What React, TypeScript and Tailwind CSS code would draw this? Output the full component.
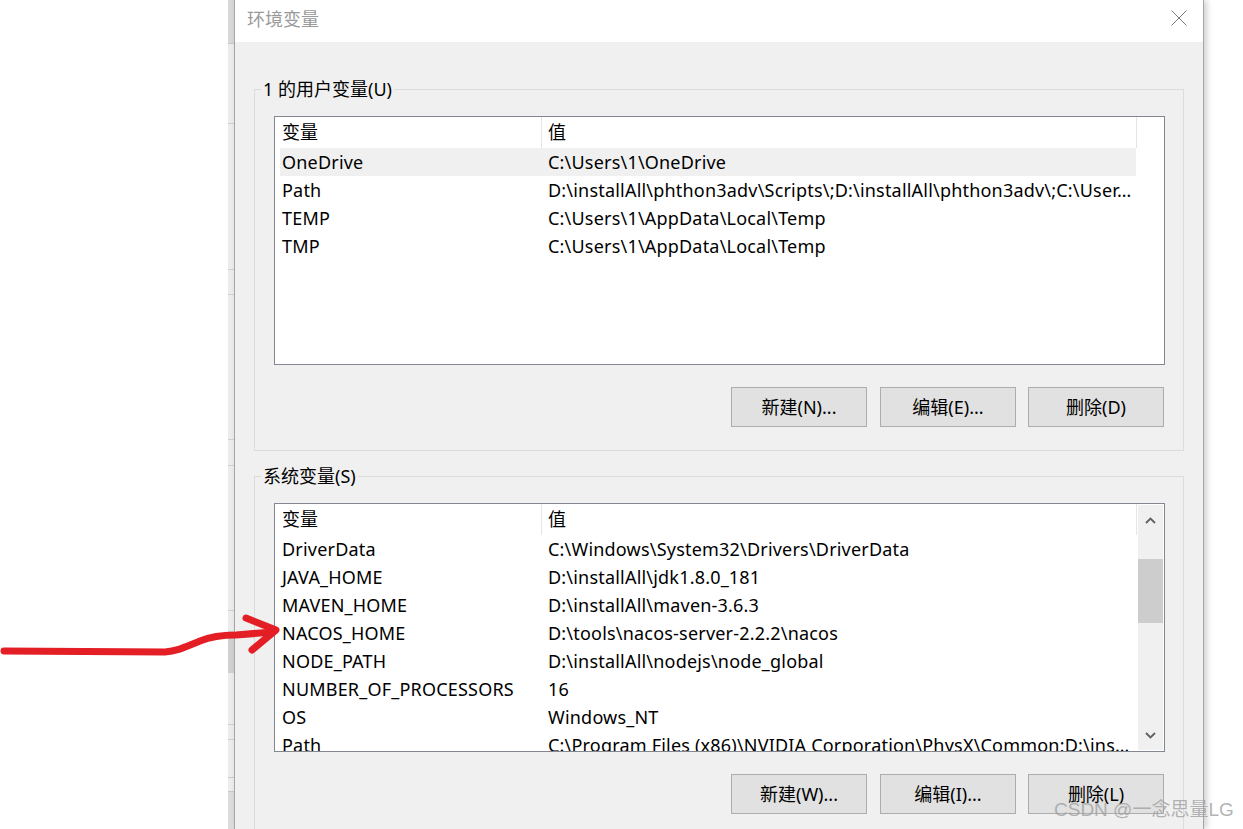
import React from "react";

type Row = [string, string];

const userRows: Row[] = [
  ["OneDrive", "C:\\Users\\1\\OneDrive"],
  ["Path", "D:\\installAll\\phthon3adv\\Scripts\\;D:\\installAll\\phthon3adv\\;C:\\User..."],
  ["TEMP", "C:\\Users\\1\\AppData\\Local\\Temp"],
  ["TMP", "C:\\Users\\1\\AppData\\Local\\Temp"],
];

const sysRows: Row[] = [
  ["DriverData", "C:\\Windows\\System32\\Drivers\\DriverData"],
  ["JAVA_HOME", "D:\\installAll\\jdk1.8.0_181"],
  ["MAVEN_HOME", "D:\\installAll\\maven-3.6.3"],
  ["NACOS_HOME", "D:\\tools\\nacos-server-2.2.2\\nacos"],
  ["NODE_PATH", "D:\\installAll\\nodejs\\node_global"],
  ["NUMBER_OF_PROCESSORS", "16"],
  ["OS", "Windows_NT"],
  ["Path", "C:\\Program Files (x86)\\NVIDIA Corporation\\PhysX\\Common;D:\\installAll\\jdk1.8.0_181\\bin"],
];

function Scrollbar() {
  return (
    <div className="w-[27px] h-full flex flex-col py-[1px] pl-[1px] pr-[1px]">
      <div className="flex-1 bg-[#f0f0f0] flex flex-col">
        <div className="h-[30px] flex items-center justify-center">
          <svg width="11" height="7" viewBox="0 0 11 7">
            <polyline points="1,6 5.5,1.5 10,6" fill="none" stroke="#606060" strokeWidth="1.8" />
          </svg>
        </div>
        <div className="h-[24px]" />
        <div className="h-[64px] bg-[#cdcdcd]" />
        <div className="flex-1" />
        <div className="h-[30px] flex items-center justify-center">
          <svg width="11" height="7" viewBox="0 0 11 7">
            <polyline points="1,1 5.5,5.5 10,1" fill="none" stroke="#606060" strokeWidth="1.8" />
          </svg>
        </div>
      </div>
    </div>
  );
}

function ListView({ rows, highlight, scroll }: { rows: Row[]; highlight?: number; scroll?: boolean }) {
  return (
    <div className="w-[891px] h-[249px] border border-[#828790] bg-white flex overflow-hidden">
      <div className="w-[862px] flex flex-col overflow-hidden">
        <div className="h-[31px] shrink-0 flex">
          <div className="w-[267px] h-full border-r border-[#e5e5e5] pl-[7px] flex items-center">变量</div>
          <div className="w-[595px] h-full border-r border-[#e5e5e5] pl-[6px] flex items-center">值</div>
        </div>
        {rows.map((r, i) => (
          <div
            key={i}
            className={
              "h-[28px] shrink-0 ml-[5px] w-[856px] flex items-center tracking-[0.2px] " +
              (i === highlight ? "bg-[#f0f0f0]" : "")
            }
          >
            <div className="w-[261px] pl-[2px] whitespace-nowrap overflow-hidden">{r[0]}</div>
            <div className="w-[595px] pl-[7px] pr-[4px] whitespace-nowrap overflow-hidden text-ellipsis">{r[1]}</div>
          </div>
        ))}
      </div>
      {scroll ? <Scrollbar /> : null}
    </div>
  );
}

function Btn({ label }: { label: string }) {
  return (
    <div className="w-[136px] h-[40px] border border-[#adadad] bg-[#e1e1e1] flex items-center justify-center">
      {label}
    </div>
  );
}

function Buttons({ labels }: { labels: [string, string, string] }) {
  return (
    <div className="mt-[22px] w-[891px] flex justify-end pr-[1px]">
      <Btn label={labels[0]} />
      <div className="w-[13px]" />
      <Btn label={labels[1]} />
      <div className="w-[12px]" />
      <Btn label={labels[2]} />
    </div>
  );
}

function Group({ title, children, className }: { title: string; children: React.ReactNode; className?: string }) {
  return (
    <div className={"relative w-[930px] border border-[#dcdcdc] pt-[26px] pl-[19px] pb-[23px] " + (className || "")}>
      <span className="absolute left-[6px] top-[-14px] px-[2px] leading-[26px] bg-[#f0f0f0]">{title}</span>
      {children}
    </div>
  );
}

export default function App() {
  return (
    <div className="relative w-[1243px] h-[829px] overflow-hidden bg-white flex font-['Noto_Sans','Noto_Sans_CJK_SC',sans-serif] text-[18px] text-black">
      <div className="w-[228px] shrink-0" />
      <div className="w-[6px] shrink-0 flex flex-col bg-[#ececec]">
        <div className="h-[44px] bg-[#d8d8d8] border-b border-[#c8c8c8]" />
        <div className="h-[80px] border-b border-[#d0d0d0]" />
        <div className="h-[146px] border-b border-[#d0d0d0]" />
        <div className="h-[25px] border-b border-[#d0d0d0]" />
        <div className="h-[145px] border-b border-[#d0d0d0]" />
        <div className="h-[26px] border-b border-[#d0d0d0]" />
        <div className="h-[145px] border-b border-[#d0d0d0]" />
        <div className="h-[20px]" />
        <div className="h-[42px] bg-[#d0d0d0]" />
        <div className="h-[52px] border-b border-[#d0d0d0]" />
        <div className="h-[15px] border-b border-[#d0d0d0]" />
        <div className="h-[38px] border-b border-[#c8c8c8]" />
        <div className="h-[14px] border-b border-[#c8c8c8]" />
        <div className="flex-1 bg-[#dcdcdc]" />
      </div>
      <div className="w-[970px] shrink-0 h-full border-l border-r border-[#a6a6a6] bg-[#f0f0f0] flex flex-col shadow-[3px_0_6px_rgba(0,0,0,0.18)]">
        <div className="h-[42px] shrink-0 bg-white flex items-center pl-[12px] pr-[16px]">
          <span className="text-[#9a9a9a] leading-none pb-[4px]">环境变量</span>
          <div className="flex-1" />
          <svg width="16" height="16" viewBox="0 0 16 16" className="mb-[6px]">
            <path d="M0.5 0.5 L15.5 15.5 M15.5 0.5 L0.5 15.5" stroke="#7a7a7a" strokeWidth="1" fill="none" />
          </svg>
        </div>
        <div className="flex-1 pt-[47px] pl-[19px] flex flex-col">
          <Group title="1 的用户变量(U)">
            <ListView rows={userRows} highlight={0} />
            <Buttons labels={["新建(N)...", "编辑(E)...", "删除(D)"]} />
          </Group>
          <Group title="系统变量(S)" className="mt-[25px]">
            <ListView rows={sysRows} scroll />
            <Buttons labels={["新建(W)...", "编辑(I)...", "删除(L)"]} />
          </Group>
        </div>
      </div>
      <div className="absolute left-[1054px] top-[796px] text-[19px] text-[#a0a0a0]/80 whitespace-nowrap font-['Liberation_Sans','Noto_Sans_CJK_SC',sans-serif]">
        CSDN @一念思量LG
      </div>
      <svg className="absolute left-0 top-0" width="1243" height="829" viewBox="0 0 1243 829">
        <path
          d="M4 651 L165 652 C178 651 185 647 200 641 C212 636 222 635 236 635 L273 632"
          fill="none"
          stroke="#e31e24"
          strokeWidth="7"
          strokeLinecap="round"
          strokeLinejoin="round"
        />
        <path
          d="M246 618 L276 630 L252 650"
          fill="none"
          stroke="#e31e24"
          strokeWidth="7"
          strokeLinecap="round"
          strokeLinejoin="round"
        />
      </svg>
    </div>
  );
}
